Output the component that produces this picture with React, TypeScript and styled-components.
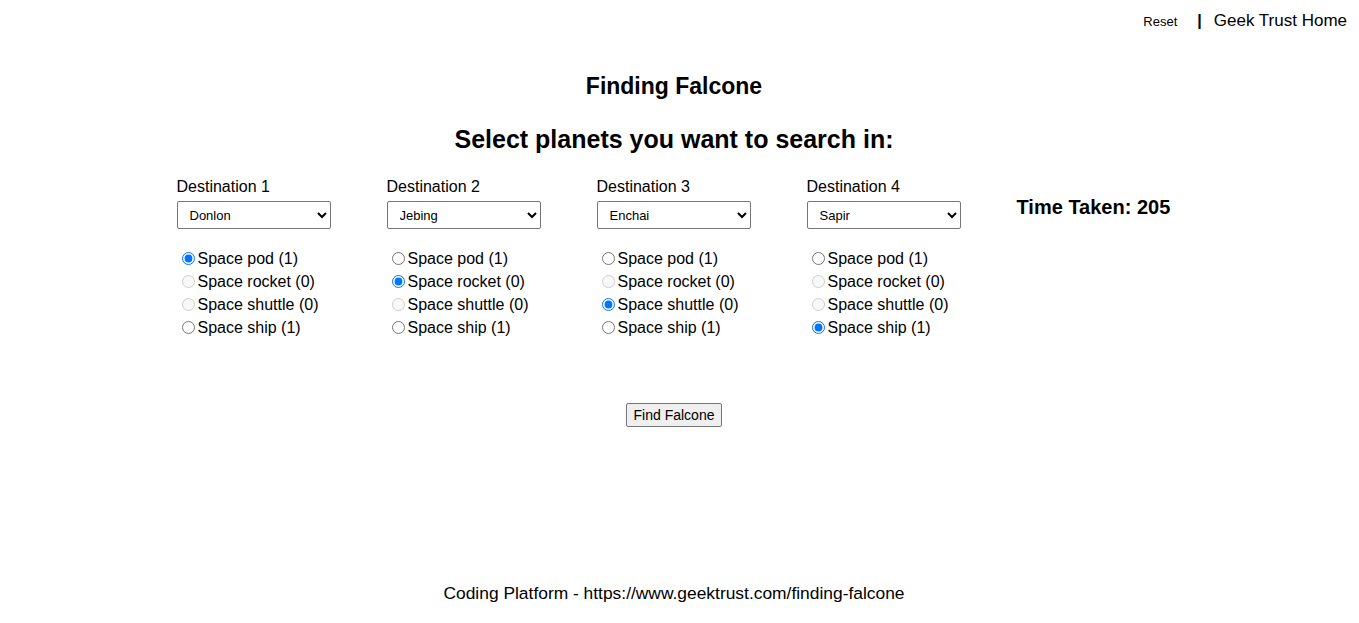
import React, { useState } from 'react';
import styled, { createGlobalStyle } from 'styled-components';

const GlobalStyle = createGlobalStyle`
  body {
    margin: 0;
    background: #fff;
    color: #000;
    font-family: "Liberation Sans", Arial, sans-serif;
  }
`;

const Page = styled.div`
  min-height: 623px;
  display: flex;
  flex-direction: column;
`;

const TopBar = styled.div`
  display: flex;
  justify-content: flex-end;
  align-items: center;
  padding: 10px 12px 0 0;
  height: 22px;
`;

const TopLink = styled.a<{ small?: boolean }>`
  color: #000;
  text-decoration: none;
  font-size: ${({ small }) => (small ? '13px' : '17px')};
  cursor: pointer;
`;

const Pipe = styled.span`
  margin: 0 12px 0 20px;
  font-size: 16px;
  font-weight: bold;
`;

// content is centred a little left of the window middle
const Content = styled.div`
  flex: 1;
  display: flex;
  flex-direction: column;
  padding-right: 11px;
`;

const Title = styled.h1`
  margin: 40px 0 0;
  text-align: center;
  font-size: 23px;
  line-height: 28px;
  font-weight: bold;
`;

const SubTitle = styled.h2`
  margin: 25px 0 0;
  text-align: center;
  font-size: 25px;
  line-height: 28px;
  font-weight: bold;
`;

const Row = styled.div`
  display: flex;
  justify-content: center;
  margin-top: 23px;
`;

const Column = styled.div`
  width: 210px;
  display: flex;
  flex-direction: column;
`;

const DestLabel = styled.div`
  font-size: 16px;
  line-height: 21px;
`;

const Select = styled.select`
  margin-top: 4px;
  width: 154px;
  height: 28px;
  padding: 0 4px 0 8px;
  font-family: "Liberation Sans", Arial, sans-serif;
  font-size: 13px;
  border: 1px solid #767676;
  border-radius: 2px;
  background: #fff;
  color: #000;
`;

const Vehicles = styled.div`
  margin-top: 18px;
  display: flex;
  flex-direction: column;
`;

const Option = styled.label`
  display: flex;
  align-items: center;
  font-size: 16px;
  line-height: 23px;
  height: 23px;

  input {
    margin: 0 3px 0 5px;
    width: 13px;
    height: 13px;
  }
`;

const TimeTaken = styled.div`
  width: 155px;
  padding-top: 20px;
  font-size: 20px;
  font-weight: bold;
  white-space: nowrap;
`;

const Actions = styled.div`
  display: flex;
  justify-content: center;
  margin-top: 64px;
`;

const FindButton = styled.button`
  font-family: "Liberation Sans", Arial, sans-serif;
  font-size: 14px;
  height: 24px;
  padding: 0 7px;
  border: 1px solid #767676;
  border-radius: 2px;
  background: #efefef;
  color: #000;
`;

const Footer = styled.div`
  margin-top: auto;
  padding-bottom: 19px;
  text-align: center;
  font-size: 17.4px;
`;

const planets = ['Donlon', 'Enchai', 'Jebing', 'Sapir', 'Lerbin', 'Pingasor'];

type Vehicle = { name: string; left: number };

const vehicles: Vehicle[] = [
  { name: 'Space pod', left: 1 },
  { name: 'Space rocket', left: 0 },
  { name: 'Space shuttle', left: 0 },
  { name: 'Space ship', left: 1 },
];

const initial = [
  { planet: 'Donlon', vehicle: 0 },
  { planet: 'Jebing', vehicle: 1 },
  { planet: 'Enchai', vehicle: 2 },
  { planet: 'Sapir', vehicle: 3 },
];

const App: React.FC = () => {
  const [picks, setPicks] = useState(initial);

  const choose = (i: number, vehicle: number) => {
    setPicks(picks.map((p, j) => (j === i ? { ...p, vehicle } : p)));
  };

  return (
    <Page>
      <GlobalStyle />
      <TopBar>
        <TopLink small>Reset</TopLink>
        <Pipe>|</Pipe>
        <TopLink>Geek Trust Home</TopLink>
      </TopBar>

      <Content>
        <Title>Finding Falcone</Title>
        <SubTitle>Select planets you want to search in:</SubTitle>

        <Row>
          {picks.map((pick, i) => (
            <Column key={i}>
              <DestLabel>Destination {i + 1}</DestLabel>
              <Select value={pick.planet} onChange={() => undefined}>
                {planets.map((p) => (
                  <option key={p} value={p}>
                    {p}
                  </option>
                ))}
              </Select>
              <Vehicles>
                {vehicles.map((v, k) => (
                  <Option key={v.name}>
                    <input
                      type="radio"
                      name={`dest-${i}`}
                      checked={pick.vehicle === k}
                      disabled={v.left === 0 && pick.vehicle !== k}
                      onChange={() => choose(i, k)}
                    />
                    {v.name} ({v.left})
                  </Option>
                ))}
              </Vehicles>
            </Column>
          ))}
          <TimeTaken>Time Taken: 205</TimeTaken>
        </Row>

        <Actions>
          <FindButton>Find Falcone</FindButton>
        </Actions>

        <Footer>Coding Platform - https://www.geektrust.com/finding-falcone</Footer>
      </Content>
    </Page>
  );
};

export default App;
